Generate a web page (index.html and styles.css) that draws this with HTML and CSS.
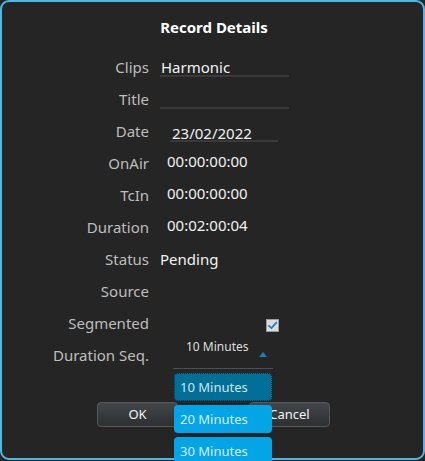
FILE: index.html
```html
<!DOCTYPE html>
<html>
<head>
<meta charset="utf-8">
<link rel="stylesheet" href="styles.css">
</head>
<body>
<div class="window">
  <h1 class="title">Record Details</h1>
  <div class="form">
    <div class="label">Clips</div>
    <div class="cell"><div class="field">Harmonic</div></div>

    <div class="label">Title</div>
    <div class="cell"><div class="field"></div></div>

    <div class="label">Date</div>
    <div class="cell"><div class="field date">23/02/2022</div></div>

    <div class="label">OnAir</div>
    <div class="cell"><div class="tc">00:00:00:00</div></div>

    <div class="label">TcIn</div>
    <div class="cell"><div class="tc">00:00:00:00</div></div>

    <div class="label">Duration</div>
    <div class="cell"><div class="tc">00:02:00:04</div></div>

    <div class="label">Status</div>
    <div class="cell"><div class="plain">Pending</div></div>

    <div class="label">Source</div>
    <div class="cell"></div>

    <div class="label">Segmented</div>
    <div class="cell">
      <div class="check">
        <svg width="13" height="13" viewBox="0 0 13 13"><path d="M3 6.8 L5.4 9.2 L10.3 3.6" fill="none" stroke="#1b88c0" stroke-width="1.9" stroke-linecap="round" stroke-linejoin="round"/></svg>
      </div>
    </div>

    <div class="label">Duration Seq.</div>
    <div class="cell">
      <div class="combo">
        <span class="combo-text">10 Minutes</span>
        <span class="arrow"></span>
      </div>
    </div>
  </div>
  <div class="buttons">
    <button class="btn">OK</button>
    <button class="btn">Cancel</button>
  </div>
  <div class="popup">
    <div class="item selected">10 Minutes</div>
    <div class="item">20 Minutes</div>
    <div class="item">30 Minutes</div>
  </div>
</div>
</body>
</html>
```

FILE: styles.css
```css
html, body {
  margin: 0;
  padding: 0;
  background: #252525;
  overflow: hidden;
}
body {
  width: 425px;
  height: 461px;
  font-family: "Noto Sans", "Open Sans", sans-serif;
}
.window {
  position: relative;
  box-sizing: border-box;
  width: 425px;
  height: 460px;
  border: 2px solid #4db8e6;
  border-radius: 9px;
  background: #252525;
  padding-top: 15px;
}
.title {
  margin: 0;
  text-align: center;
  font-size: 15px;
  font-weight: 700;
  line-height: 20px;
  color: #ffffff;
  padding-left: 3px;
}
.form {
  margin-top: 14px;
  display: grid;
  grid-template-columns: 147px 1fr;
  grid-auto-rows: 32px;
  column-gap: 11px;
  align-items: start;
}
.label {
  text-align: right;
  font-size: 15px;
  line-height: 32px;
  color: #bebebe;
  white-space: nowrap;
}
.cell {
  font-size: 15px;
  color: #f2f2f2;
}
.field {
  width: 128px;
  height: 24px;
  line-height: 32px;
  border-bottom: 2px solid #3a3a3a;
  padding-left: 1px;
  box-sizing: content-box;
}
.field.date {
  margin-left: 10px;
  width: 106px;
  height: 25px;
  line-height: 36px;
  padding-left: 2px;
}
.tc {
  margin-left: 7px;
  line-height: 28px;
}
.plain {
  line-height: 32px;
}
.check {
  margin-left: 106px;
  margin-top: 12px;
  width: 13px;
  height: 13px;
  background: #dcdcdc;
  border: 1px solid #9a9a9a;
  box-sizing: border-box;
  display: flex;
}
.check svg {
  margin: -1px;
}
.combo {
  margin-left: 13px;
  width: 100px;
  height: 29px;
  border-bottom: 1px solid #4e4e4e;
  display: flex;
  justify-content: space-between;
  align-items: flex-start;
}
.combo-text {
  padding-left: 13px;
  font-size: 12px;
  line-height: 16px;
  color: #dedede;
}
.arrow {
  margin-top: 13px;
  margin-right: 6px;
  width: 0;
  height: 0;
  border-left: 4px solid transparent;
  border-right: 4px solid transparent;
  border-bottom: 5px solid #1a80b2;
}
.buttons {
  margin-top: 31px;
  display: flex;
  justify-content: center;
  gap: 71px;
  padding-left: 2px;
}
.btn {
  width: 81px;
  height: 25px;
  box-sizing: border-box;
  border: 1px solid #55585b;
  border-radius: 4px;
  background: linear-gradient(180deg, #44474a 0%, #393c3f 45%, #2d2f31 100%);
  color: #f4f4f4;
  font-family: "Noto Sans", "Open Sans", sans-serif;
  font-size: 13px;
  line-height: 21px;
  padding: 0;
}
.popup {
  position: absolute;
  left: 172px;
  top: 371px;
  width: 98px;
  display: flex;
  flex-direction: column;
  gap: 4px;
}
.item {
  height: 28px;
  box-sizing: border-box;
  border-radius: 4px;
  background: #04a5e6;
  color: #d7eef8;
  font-size: 13px;
  line-height: 28px;
  padding-left: 6px;
}
.selected {
  background: #016f98;
  border: 1px dotted #0b2c3c;
  line-height: 26px;
  padding-left: 5px;
  color: #cfe6ef;
}
```
